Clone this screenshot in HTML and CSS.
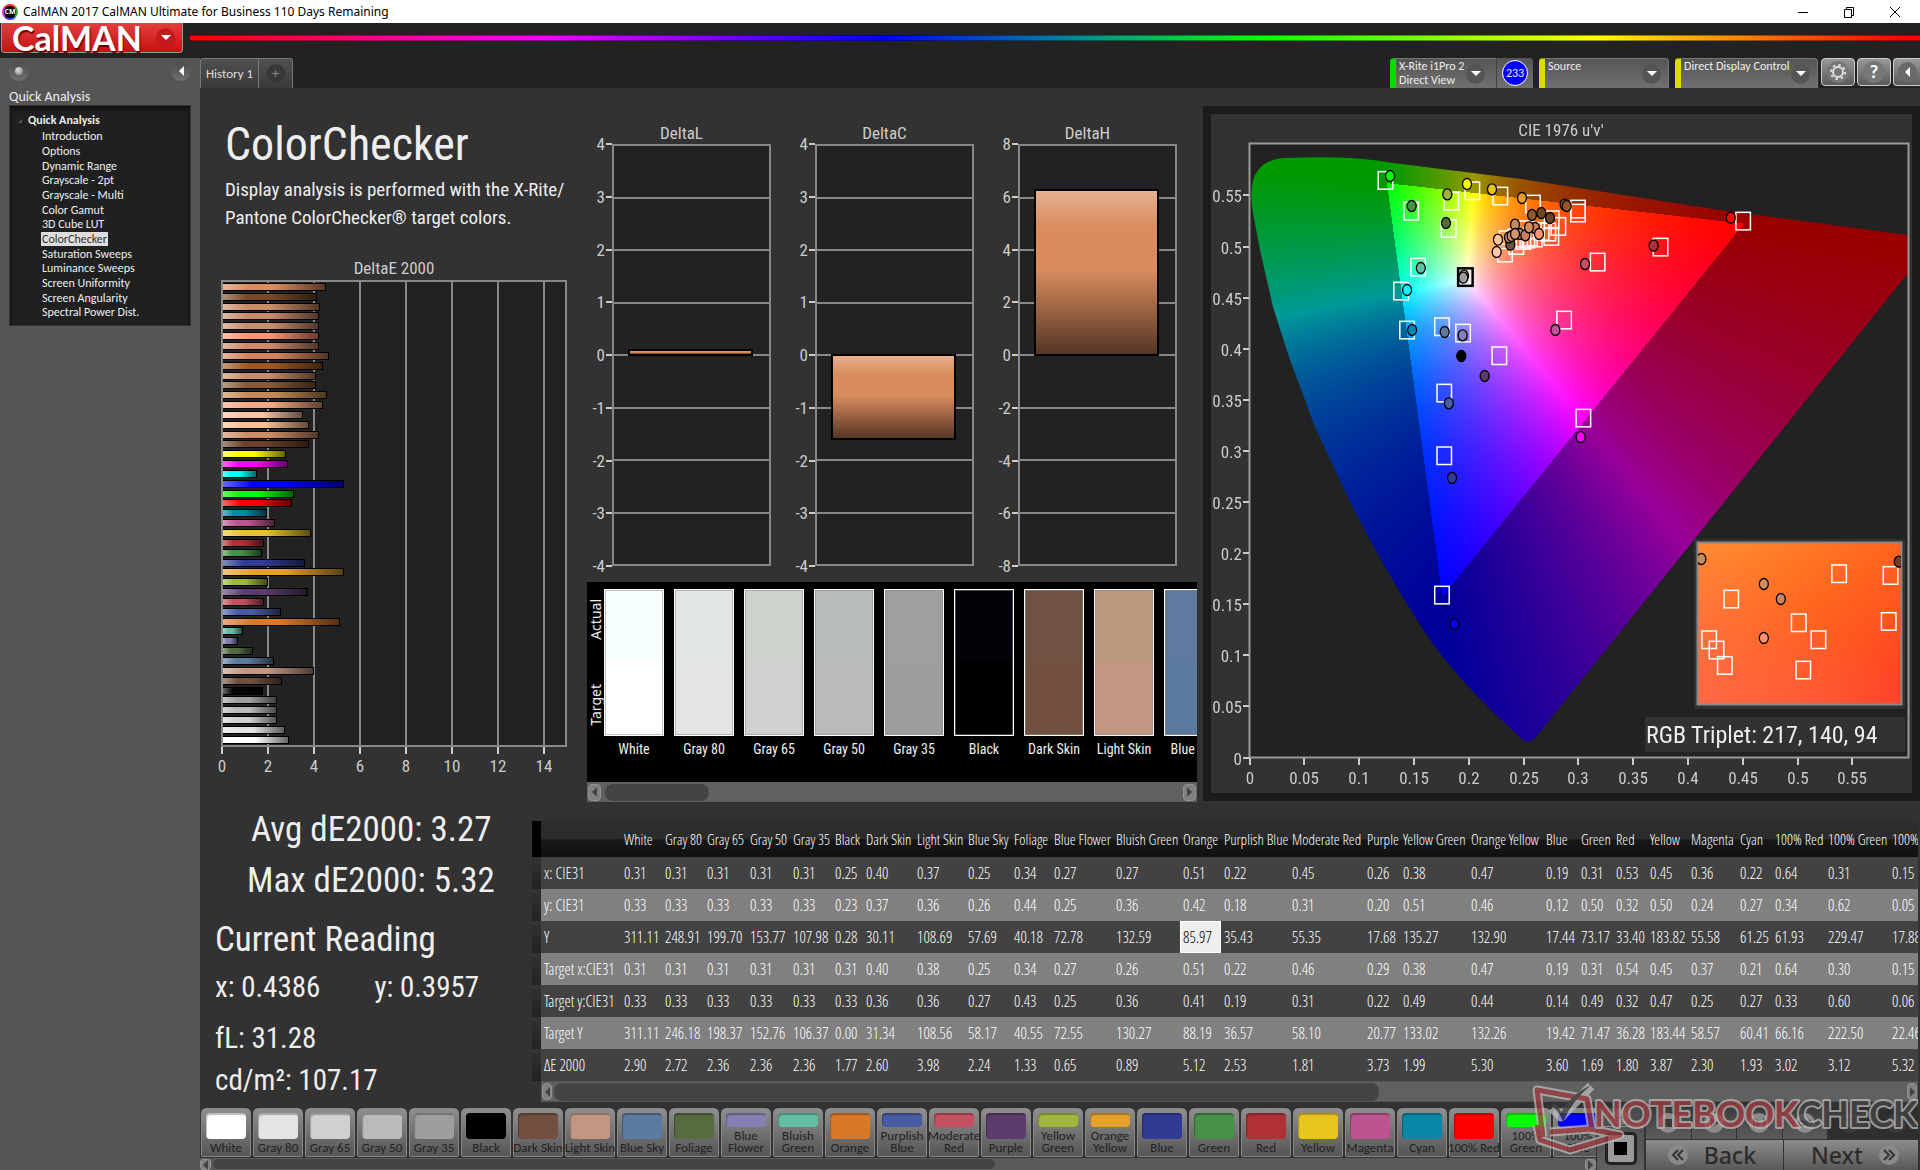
FILE: index.html
```html
<!DOCTYPE html>
<html lang="en">
<head>
<meta charset="utf-8">
<title>CalMAN 2017</title>
<link rel="stylesheet" href="styles.css">
</head>
<body>
<header class="titlebar">
  <span class="app-icon">CM</span>
  <span class="app-title">CalMAN 2017 CalMAN Ultimate for Business 110 Days Remaining</span>
  <span class="window-buttons">
    <button aria-label="Minimize"><svg width="12" height="12"><path d="M1 6.5h10"/></svg></button>
    <button aria-label="Restore"><svg width="12" height="12"><path d="M1.5 3.5h7v8h-7zM3.500 3.500v-2h7v8h-2"/></svg></button>
    <button aria-label="Close"><svg width="12" height="12"><path d="M1 1l10 10M11 1L1 11"/></svg></button>
  </span>
</header>
<div class="brandbar">
  <button class="brand"><span>CalMAN</span><i class="drop red"></i></button>
  <div class="rainbow"></div>
</div>
<div class="shell">
  <aside class="sidebar">
    <div class="side-tools"><button class="orb" aria-label="Pin"></button><button class="collapse" aria-label="Collapse"></button></div>
    <h2>Quick Analysis</h2>
    <nav class="tree">
      <strong>Quick Analysis</strong>
      <a href="#">Introduction</a><a href="#">Options</a><a href="#">Dynamic Range</a><a href="#">Grayscale - 2pt</a><a href="#">Grayscale - Multi</a><a href="#">Color Gamut</a><a href="#">3D Cube LUT</a><a href="#" class="current">ColorChecker</a><a href="#">Saturation Sweeps</a><a href="#">Luminance Sweeps</a><a href="#">Screen Uniformity</a><a href="#">Screen Angularity</a><a href="#">Spectral Power Dist.</a>
    </nav>
  </aside>
  <div class="main">
    <div class="tabs">
      <button class="tab">History 1</button><button class="tab add" aria-label="Add history"><span>+</span></button>
      <div class="devices">
        <button class="device meter"><span>X-Rite i1Pro 2<br>Direct View</span><i class="drop"></i></button><span class="count"><b>233</b></span>
        <button class="device source"><span>Source</span><i class="drop"></i></button>
        <button class="device display"><span>Direct Display Control</span><i class="drop"></i></button>
        <button class="tool" aria-label="Settings"><svg width="24" height="24" viewBox="-12 -12 24 24"><circle r="11" fill="#777"/><g stroke="#ddd" fill="none"><circle r="5" stroke-width="2"/><circle r="7" stroke-width="2" stroke-dasharray="2.500 3"/></g></svg></button>
        <button class="tool" aria-label="Help"><b>?</b></button>
        <button class="tool last" aria-label="Collapse"><i class="left-arrow"></i></button>
      </div>
    </div>
    <main class="content">
      <div class="upper">
        <section class="intro">
          <h1>ColorChecker</h1>
          <p>Display analysis is performed with the X-Rite/<br>Pantone ColorChecker® target colors.</p>
          <figure class="delta-e">
            <figcaption>DeltaE 2000</figcaption>
            <div class="plot" id="bars"></div>
            <div class="x-axis"><span>0</span><span>2</span><span>4</span><span>6</span><span>8</span><span>10</span><span>12</span><span>14</span></div>
          </figure>
        </section>
        <section class="middle">
          <div class="deltas" id="deltas"></div>
          <div class="compare">
            <div class="sides"><span>Actual</span><span>Target</span></div>
            <div class="pairs" id="pairs"></div>
          </div>
          <div class="scroll s1"><i class="left-arrow"></i><span class="thumb"></span><i class="right-arrow"></i></div>
        </section>
        <section class="cie">
          <canvas id="gamut" width="701" height="679"></canvas>
          <svg id="cie" viewBox="1211 114 701 679"></svg>
        </section>
      </div>
      <div class="lower">
        <section class="readings">
          <p class="big avg">Avg dE2000: 3.27</p>
          <p class="big max">Max dE2000: 5.32</p>
          <p class="big current-title">Current Reading</p>
          <p class="row"><span>x: 0.4386</span><span>y: 0.3957</span></p>
          <p class="fl">fL: 31.28</p>
          <p class="cd">cd/m²: 107.17</p>
        </section>
        <section class="data">
          <div class="data-clip"><table id="table"></table></div>
          <div class="scroll s2"><i class="left-arrow"></i><span class="thumb"></span><i class="right-arrow"></i></div>
        </section>
      </div>
    </main>
    <footer class="bottom">
      <div class="patches">
        <div class="patch-row" id="patches"></div>
        <div class="scroll s3"><i class="left-arrow"></i><span class="thumb"></span><i class="right-arrow"></i></div>
      </div>
      <div class="stop"><button class="up" aria-label="Expand"><svg width="20" height="18"><circle cx="10" cy="9" r="8" fill="#707070"/><path d="M6 11l4-5 4 5z" fill="#444"/></svg></button><button class="stop-button" aria-label="Stop"><i></i></button></div>
      <div class="transport">
        <div class="controls">
          <button aria-label="Stop reading"><svg viewBox="-12 -12 24 24"><circle r="10"/><path d="M-4-4h8v8h-8z"/></svg></button>
          <button aria-label="Play"><svg viewBox="-12 -12 24 24"><circle r="10"/><path d="M-3-5l8 5-8 5z"/></svg></button>
          <button aria-label="Read series"><svg viewBox="-12 -12 24 24"><circle r="10"/><path d="M-6-5h2v10h-2zM4-5h2v10h-2zM-3-4l6 4-6 4z"/></svg></button>
          <button aria-label="Continuous"><svg viewBox="-12 -12 24 24"><circle r="10"/><path class="line" d="M0 0c-2-3-6-3-6 0s4 3 6 0 6-3 6 0-4 3-6 0z"/></svg></button>
          <button class="off" aria-label="Refresh" disabled><svg viewBox="-12 -12 24 24"><circle r="10"/><path class="line" d="M5-2a5 5 0 1 0 0 5"/></svg></button>
          <button class="off" aria-label="More" disabled><svg viewBox="-12 -12 24 24"><circle r="10"/></svg></button>
        </div>
        <div class="steps">
          <button><svg viewBox="-12 -12 24 24"><circle r="10"/><path class="line" d="M0-5l-5 5 5 5M5-5l-5 5 5 5"/></svg><span>Back</span></button>
          <button><span>Next</span><svg viewBox="-12 -12 24 24"><circle r="10"/><path class="line" d="M0-5l5 5-5 5M-5-5l5 5-5 5"/></svg></button>
        </div>
      </div>
      <svg class="watermark" width="390" height="78" viewBox="1528 1082 390 78">
        <g fill="none" stroke-linejoin="round">
          <g stroke="#bbb" stroke-width="9"><path d="M1592 1130L1587 1099 1537 1090 1543 1137"/><path d="M1550 1132L1590 1129 1620 1135 1570 1150 1540 1140 1537 1125"/><path d="M1552 1108l9 9 30-31"/></g>
          <g stroke="#a23c40" stroke-width="5"><path d="M1592 1130L1587 1099 1537 1090 1543 1137"/><path d="M1550 1132L1590 1129 1620 1135 1570 1150 1540 1140 1537 1125"/></g>
        </g>
        <path d="M1550 1105q8-2 11 7 10-18 30-27-20 17-28 37-4-12-13-17z" fill="#444"/>
        <text x="1594" y="1127"><tspan class="red-part">NOTEBOOK</tspan><tspan class="grey-part">CHECK</tspan></text>
      </svg>
    </footer>
  </div>
</div>
<script src="script.js"></script>
</body>
</html>
```
FILE: styles.css
```css
* { box-sizing: border-box; }
body { margin: 0; min-height: 100vh; display: flex; flex-direction: column; background: #222; color: #eee; font-family: Carlito, Calibri, Lato, sans-serif; font-size: 12px; }
h1, h2, p, figure { margin: 0; font-weight: 400; }
button { font: inherit; color: inherit; border: 0; padding: 0; margin: 0; background: none; }
a { color: inherit; text-decoration: none; }
i { display: block; flex: none; }

.titlebar { height: 23px; background: #fff; color: #000; display: flex; align-items: center; gap: 5px; padding-left: 2px; font-family: "Noto Sans", "Open Sans", sans-serif; }
.app-icon { width: 16px; height: 16px; border-radius: 50%; border: 2px solid; border-color: #e33 #3a3 #33e #c3c; background: #000; color: #fff; font-size: 7px; font-weight: 700; line-height: 12px; text-align: center; }
.window-buttons { margin-left: auto; display: flex; gap: 34px; padding-right: 19px; }
.window-buttons svg { display: block; fill: none; stroke: #000; }

.brandbar { height: 35px; display: flex; align-items: flex-start; padding-left: 1px; gap: 7px; }
.brand { width: 182px; height: 30px; display: flex; align-items: center; justify-content: space-between; padding: 0 7px 0 10px; background: linear-gradient(#e04040, #c81010); border: 1px solid #999; border-top: 0; border-radius: 0 0 4px 4px; font-family: Lato, sans-serif; font-size: 34px; font-weight: 700; color: #fff; line-height: 30px; text-shadow: 1px 2px 1px #600; }
.rainbow { flex: 1; height: 6px; margin-top: 12px; border-top: 1px solid #0006; border-bottom: 1px solid #0006; background: linear-gradient(90deg, #f00, #f0f 20%, #00f 40%, #00a080 53%, #0f0 62%, #ff0 81%, #f00 99%); }
.drop { width: 19px; height: 20px; border-radius: 50%; background: #555; display: grid; place-items: center; }
.drop.red { background: #c41a1a; }
.drop::after { content: ""; border: 5px solid transparent; border-top: 5px solid #fff; border-bottom: 0; }

.shell { flex: 1; display: flex; }
.sidebar { width: 200px; background: #555; padding: 3px 9px; }
.side-tools { display: flex; justify-content: space-between; height: 28px; }
.side-tools button { width: 20px; height: 20px; border-radius: 50%; background: linear-gradient(#4a4a4a, #707070); display: grid; place-items: center; }
.orb::after { content: ""; width: 8px; height: 8px; border-radius: 50%; background: radial-gradient(circle at 35% 35%, #ddd, #777); }
.collapse::after, .left-arrow::after { content: ""; border: 5px solid transparent; border-right-color: #fff; border-left: 0; }
.right-arrow::after { content: ""; border: 5px solid transparent; border-left-color: #444; border-right: 0; }
.sidebar h2 { font-size: 14px; line-height: 16px; }
.tree { background: #202020; border: 1px solid #333; box-shadow: inset 0 3px 5px #111; height: 221px; padding: 6px 0 0 31px; display: flex; flex-direction: column; align-items: flex-start; }
.tree strong { line-height: 17px; margin-left: -13px; position: relative; }
.tree strong::before { content: ""; position: absolute; left: -10px; top: 7px; border-left: 4px solid transparent; border-bottom: 4px solid #555; }
.tree a { line-height: 14px; height: 14px; padding: 0 1px; margin-bottom: 1px; }
.tree a:nth-of-type(3n) { margin-bottom: 0; }
.tree .current { background: #ddd; color: #333; }

.main { flex: 1; min-width: 0; display: flex; flex-direction: column; }
.tabs { height: 30px; display: flex; }
.tab { width: 59px; border: 1px solid #777; border-bottom: 0; background: linear-gradient(#505050, #3a3a3a); border-radius: 3px 0 0 0; font-size: 13px; color: #ddd; }
.tab.add { width: 34px; border-left: 0; border-radius: 0 3px 0 0; display: grid; place-items: center; color: #888; font-size: 15px; }
.add span { width: 18px; height: 19px; border-radius: 50%; background: #383838; line-height: 19px; }
.devices { margin-left: auto; display: flex; }
.device { display: flex; align-items: center; justify-content: space-between; height: 30px; padding: 0 7px 0 3px; background: linear-gradient(#555, #707070); border: 1px solid #777; border-bottom: 0; border-radius: 4px 4px 0 0; border-left: 6px solid #dd0; text-align: left; line-height: 14px; }
.device > span { align-self: flex-start; white-space: nowrap; }
.meter { width: 107px; border-left-color: #0d0; padding-right: 11px; border-right: 1px solid #444; border-radius: 4px 0 0 0; }
.count { width: 36px; height: 30px; background: linear-gradient(#555, #707070); border-radius: 0 4px 0 0; margin-right: 6px; display: grid; place-items: center; }
.count b { width: 26px; height: 26px; border: 1px solid #fff; border-radius: 50%; background: #00f; line-height: 24px; text-align: center; font-weight: 400; }
.source { width: 130px; margin-right: 6px; }
.display { width: 143px; margin-right: 3px; }
.tool { width: 34px; height: 28px; border: 1px solid #ccc; border-radius: 4px; background: linear-gradient(#999, #5a5a5a); margin-right: 2px; display: grid; place-items: center; }
.tool b { width: 22px; height: 22px; border-radius: 50%; background: #777; font-size: 19px; line-height: 22px; color: #fff; }
.tool.last { width: 27px; margin: 0; border-right: 0; border-radius: 4px 0 0 4px; }
.tool .left-arrow { width: 19px; height: 20px; border-radius: 50%; background: #6a6a6a; display: grid; place-items: center; }

.content { flex: 1; background: #323232; font-family: "Roboto Condensed", "Open Sans Condensed", Roboto, sans-serif; }
.upper { display: flex; height: 714px; }
.intro { width: 380px; padding: 27px 0 0 25px; }
.intro h1 { font-size: 46px; line-height: 58px; }
.intro p { font-size: 19px; line-height: 28px; margin-top: 3px; white-space: nowrap; }
.delta-e { margin: 26px 0 0 -4px; width: 346px; }
figcaption { text-align: center; font-size: 17px; line-height: 20px; color: #ccc; }
.plot { position: relative; background: #222; border: 2px solid #888; }
.delta-e .plot { margin-top: 2px; height: 467px; display: flex; flex-direction: column; background: repeating-linear-gradient(90deg, #222 0 44px, #888 44px 46px); }
.slot { flex: 1; display: flex; align-items: center; }
.bar { height: 8px; border: 1px solid #000; border-left: 0; }
.x-axis { display: flex; margin-left: -22px; color: #ccc; font-size: 17px; line-height: 20px; width: 370px; }
.x-axis span { width: 46px; flex: none; text-align: center; }
.x-axis span::before { content: ""; display: block; width: 2px; height: 7px; margin: 0 auto 2px; background: #ccc; }

.middle { width: 618px; padding-top: 35px; }
.deltas { display: flex; }
.delta { width: 203px; }
.delta-body { display: flex; margin-top: 1px; padding-right: 12px; }
.y-axis { width: 32px; margin: -10px 0; display: flex; flex-direction: column; justify-content: space-between; color: #ccc; font-size: 17px; line-height: 20px; }
.y-axis span { display: flex; justify-content: flex-end; align-items: center; gap: 1px; }
.y-axis span::after { content: ""; width: 6px; height: 2px; background: #ccc; }
.delta .plot { flex: 1; height: 422px; display: flex; flex-direction: column; }
.line { flex: 1; border-bottom: 2px solid #888; }
.line:nth-child(8) { border: 0; }
.block { position: absolute; left: 9%; width: 81%; border: 2px solid #000; background: linear-gradient(#e6b090, #d98c5e 22%, #d98c5e 48%, #553625); }
.compare { margin: 16px 0 0 7px; height: 200px; width: 610px; background: #000; display: flex; overflow: hidden; padding-top: 7px; }
.sides { width: 17px; flex: none; height: 147px; display: flex; flex-direction: column; justify-content: space-between; padding: 10px 0; align-items: center; font-family: "Noto Sans", sans-serif; font-size: 14px; }
.sides span { writing-mode: vertical-rl; transform: rotate(180deg); line-height: 17px; }
.pairs { display: flex; gap: 10px; }
.pair { width: 60px; flex: none; text-align: center; font-size: 14px; white-space: nowrap; line-height: 26px; }
.pair div { height: 147px; border: 1px solid #fff; outline: 1px solid #8888; outline-offset: -2px; }
.scroll { background: #606060; display: flex; align-items: center; }
.scroll .right-arrow { margin-left: auto; }
.scroll i { width: 13px; height: 17px; background: #808080; border-radius: 4px; border: 1px solid #929292; display: grid; place-items: center; }
.scroll .left-arrow::after { border-right-color: #444; }
.thumb { background: #444; border-radius: 8px; height: 17px; }
.s1 { margin-left: 7px; width: 610px; height: 20px; padding: 0 1px; }
.s1 .thumb { width: 104px; margin-left: 4px; }

.cie { flex: 1; margin: 18px 0 0 5px; border: 8px solid #1b1b1b; display: grid; align-self: flex-start; }
.cie canvas, .cie svg { grid-area: 1 / 1; width: 100%; display: block; }
.cie text { fill: #ccc; font-size: 17px; }
.cie .triplet { fill: #eee; font-size: 24px; }

.lower { display: flex; height: 306px; }
.readings { width: 332px; flex: none; padding-left: 15px; font-size: 29px; white-space: nowrap; }
.readings p { line-height: 40px; }
.readings .big { font-size: 35px; }
.readings .avg { margin: 8px 0 0 36px; }
.readings .max { margin: 11px 0 0 32px; }
.readings .current-title { margin-top: 19px; }
.readings .row { display: flex; gap: 54px; margin-top: 7px; }
.readings .fl { margin-top: 11px; }
.readings .cd { margin-top: 2px; }
.data { flex: 1; min-width: 0; padding: 19px 2px 0 0; }
.data-clip { overflow: hidden; }
table { border-collapse: collapse; table-layout: fixed; width: 100%; color: #fff; font-family: "Open Sans Condensed Light", "Open Sans Condensed", "Roboto Condensed", sans-serif; font-size: 16px; }
th, td { padding: 0 0 0 3px; text-align: left; font-weight: 400; white-space: nowrap; height: 32px; line-height: 30px; }
thead th { height: 36px; font-size: 15px; background: linear-gradient(#2c2c2c 50%, #181818 52%, #101010); }
thead th:first-child { background: #000; }
tbody tr { background: #424242; }
tbody tr:nth-child(even) { background: #808080; }
tbody td.edge { background: linear-gradient(#333, #222); }
td.selected { background: #eee; color: #000; box-shadow: inset 0 0 0 1px #fff; }
.s2 { margin-left: 9px; height: 21px; border: 1px solid #555; }
.s2 i { width: 10px; }
.s2 .thumb { margin-left: 2px; width: 60%; height: 18px; }

.bottom { position: relative; height: 62px; display: flex; background: #323232; }
.patches { flex: 1; min-width: 0; overflow: hidden; }
.patch-row { display: flex; gap: 2px; padding-left: 1px; height: 49px; }
.patch { width: 50px; height: 49px; flex: none; border: 1px solid #888; border-radius: 5px 5px 2px 2px; background: linear-gradient(#8f8f8f, #555); color: #222; display: flex; flex-direction: column; align-items: center; padding-top: 4px; font-size: 13px; line-height: 12px; white-space: nowrap; }
.patch i { width: 40px; flex: 1; border-radius: 4px; box-shadow: inset 1px 2px 1px #0004; margin-bottom: 3px; }
.patch span { padding-bottom: 2px; }
.s3 { height: 12px; margin-top: 1px; background: #5a5a5a; }
.s3 i { width: 11px; height: 11px; border-radius: 3px; }
.s3 .thumb { height: 10px; width: 56%; margin-left: 2px; }
.stop { width: 49px; border-right: 2px solid #333; background: linear-gradient(#4a4a4a, #606060); display: flex; flex-direction: column; align-items: center; gap: 5px; margin-left: 1px; }
.up { width: 100%; height: 19px; border-bottom: 1px solid #888; display: grid; place-items: center; }
.stop-button { width: 32px; height: 33px; border: 3px solid #222; border-radius: 5px; background: #999; display: grid; place-items: center; }
.stop-button i { width: 13px; height: 13px; background: #000; }
.transport { width: 274px; padding-right: 2px; display: flex; flex-direction: column; gap: 1px; }
.controls, .steps { flex: 1; display: flex; gap: 1px; }
.controls button { flex: 1; background: linear-gradient(#3c3c3c, #5c5c5c); display: grid; place-items: center; }
.controls .off { background: #2e2e2e; }
.controls .off circle { fill: #3a3a3a; }
.controls .off path { stroke: #222; }
.transport svg { width: 24px; height: 24px; }
.transport circle { fill: #8a8a8a; }
.transport path { fill: #3a3a3a; }
.transport path.line { fill: none; stroke: #333; stroke-width: 2; }
.steps button { flex: 1; background: linear-gradient(#8c8c8c, #585858); display: flex; align-items: center; justify-content: space-between; padding: 0 27px 0 20px; color: #2c2c2c; font-family: "Noto Sans", "Open Sans", sans-serif; font-size: 23px; font-weight: 500; line-height: 28px; }
.steps button:last-child { padding: 0 17px 0 27px; }
.watermark { position: absolute; right: 2px; bottom: 10px; pointer-events: none; opacity: .75; }
.watermark text { font-family: Lato, sans-serif; font-size: 36px; font-weight: 700; paint-order: stroke; stroke: #bbb; stroke-width: 4px; stroke-linejoin: round; }
.red-part { fill: #a83c42; }
.grey-part { fill: #444; }
```
FILE: script.js
```js
const el = (tag, cls, html) => { const e = document.createElement(tag); if (cls) e.className = cls; if (html !== undefined) e.innerHTML = html; return e; };

// DeltaE 2000 bars, top to bottom
const bars = [
  [4.53,'#d98c5e'],[4.14,'#7a4a26'],[4.27,'#c98c68'],[4.23,'#c98a6c'],[4.23,'#c98e6e'],[4.23,'#ff9470'],[4.23,'#d08868'],[4.66,'#d4835c'],[4.4,'#a0561f'],[4.1,'#c98c6c'],[4.1,'#8a5a34'],[4.58,'#c48a56'],[4.4,'#f4a680'],[3.53,'#f8c4a6'],[3.79,'#fcc090'],[4.23,'#cc8c66'],[3.75,'#6c4028'],[2.76,'#ffff00'],[2.84,'#ff00ff'],[1.49,'#00ffff'],[5.32,'#0000ff'],[3.12,'#00ff00'],[3.02,'#ff0000'],[1.93,'#0888a6'],[2.3,'#bc5490'],[3.87,'#e8c41e'],[1.8,'#b03038'],[1.69,'#469048'],[3.6,'#303c94'],[5.3,'#e6a02c'],[1.99,'#9eb83e'],[3.73,'#5c3c6c'],[1.81,'#c45060'],[2.53,'#485ca4'],[5.12,'#d87828'],[0.89,'#62bda6'],[0.65,'#8580b2'],[1.33,'#566b40'],[2.24,'#5c7aa0'],[3.98,'#c29682'],[2.6,'#725040'],[1.77,'#060606'],[2.36,'#a0a0a0'],[2.36,'#bababa'],[2.36,'#d0d0d0'],[2.72,'#e4e4e4'],[2.9,'#ffffff']];
const barBox = document.getElementById('bars');
for (const [v, c] of bars) {
  const slot = el('div', 'slot'), b = el('div', 'bar');
  b.style.width = v / 15 * 100 + '%';
  b.style.background = `linear-gradient(90deg,#fff6,#fff0 25%,#0000 50%,#0009),${c}`;
  slot.append(b); barBox.append(slot);
}

// DeltaL / DeltaC / DeltaH panels
for (const [name, max, v] of [['DeltaL', 4, .1], ['DeltaC', 4, -1.62], ['DeltaH', 8, 6.3]]) {
  const f = el('figure', 'delta', `<figcaption>${name}</figcaption>`);
  const body = el('div', 'delta-body'), axis = el('div', 'y-axis'), plot = el('div', 'plot');
  for (let i = 4; i >= -4; i--) axis.append(el('span', '', i * max / 4));
  for (let i = 0; i < 8; i++) plot.append(el('div', 'line'));
  const b = el('div', 'block');
  b.style.top = 49.7 - Math.max(v, 0) / max * 50 + '%';
  b.style.height = Math.abs(v) / max * 50 + .5 + '%';
  plot.append(b); body.append(axis, plot); f.append(body);
  document.getElementById('deltas').append(f);
}

// measured over target colour
for (const [n, a, t] of [['White','#f8ffff','#fff'],['Gray 80','#e2e6e5','#e4e4e4'],['Gray 65','#cfd3ce','#d0d0d0'],['Gray 50','#b7bbba','#bababa'],['Gray 35','#9da09e','#9e9e9e'],['Black','#020208','#000'],['Dark Skin','#6f5241','#725040'],['Light Skin','#bb997e','#c29682'],['Blue Sky','#60799f','#5c7aa0']]) {
  const p = el('div', 'pair'), s = el('div');
  s.style.background = `linear-gradient(${a} 50%,${t} 50%)`;
  p.append(s, n); document.getElementById('pairs').append(p);
}

// data table
const names = ['White','Gray 80','Gray 65','Gray 50','Gray 35','Black','Dark Skin','Light Skin','Blue Sky','Foliage','Blue Flower','Bluish Green','Orange','Purplish Blue','Moderate Red','Purple','Yellow Green','Orange Yellow','Blue','Green','Red','Yellow','Magenta','Cyan','100% Red','100% Green','100% Blue'];
const rows = {
  'x: CIE31': '0.31 0.31 0.31 0.31 0.31 0.25 0.40 0.37 0.25 0.34 0.27 0.27 0.51 0.22 0.45 0.26 0.38 0.47 0.19 0.31 0.53 0.45 0.36 0.22 0.64 0.31 0.15',
  'y: CIE31': '0.33 0.33 0.33 0.33 0.33 0.23 0.37 0.36 0.26 0.44 0.25 0.36 0.42 0.18 0.31 0.20 0.51 0.46 0.12 0.50 0.32 0.50 0.24 0.27 0.34 0.62 0.05',
  'Y': '311.11 248.91 199.70 153.77 107.98 0.28 30.11 108.69 57.69 40.18 72.78 132.59 85.97 35.43 55.35 17.68 135.27 132.90 17.44 73.17 33.40 183.82 55.58 61.25 61.93 229.47 17.88',
  'Target x:CIE31': '0.31 0.31 0.31 0.31 0.31 0.31 0.40 0.38 0.25 0.34 0.27 0.26 0.51 0.22 0.46 0.29 0.38 0.47 0.19 0.31 0.54 0.45 0.37 0.21 0.64 0.30 0.15',
  'Target y:CIE31': '0.33 0.33 0.33 0.33 0.33 0.33 0.36 0.36 0.27 0.43 0.25 0.36 0.41 0.19 0.31 0.22 0.49 0.44 0.14 0.49 0.32 0.47 0.25 0.27 0.33 0.60 0.06',
  'Target Y': '311.11 246.18 198.37 152.76 106.37 0.00 31.34 108.56 58.17 40.55 72.55 130.27 88.19 36.57 58.10 20.77 133.02 132.26 19.42 71.47 36.28 183.44 58.57 60.41 66.16 222.50 22.46',
  'ΔE 2000': '2.90 2.72 2.36 2.36 2.36 1.77 2.60 3.98 2.24 1.33 0.65 0.89 5.12 2.53 1.81 3.73 1.99 5.30 3.60 1.69 1.80 3.87 2.30 1.93 3.02 3.12 5.32' };
const widths = [9,80,41,42,43,43,42,31,51,51,46,40,62,67,41,68,75,36,68,75,35,35,34,41,49,35,53,64];
document.getElementById('table').innerHTML =
  '<colgroup>' + widths.map(w => `<col style="width:${w}px">`).join('') + '<col></colgroup>' +
  '<thead><tr><th></th><th></th>' + names.map(n => `<th scope="col">${n}</th>`).join('') + '</tr></thead><tbody>' +
  Object.entries(rows).map(([k, v]) => `<tr><td class="edge"></td><th scope="row">${k}</th>` + v.split(' ').map((x, i) => `<td${k === 'Y' && i === 12 ? ' class="selected"' : ''}>${x}</td>`).join('') + '</tr>').join('') + '</tbody>';

// patch buttons
const colours = ['#fff','#e4e4e4','#d0d0d0','#bababa','#9e9e9e','#000','#725040','#c29682','#5c7aa0','#566b40','#8580b2','#62bda6','#d87828','#485ca4','#c45060','#5c3c6c','#9eb83e','#e6a02c','#303c94','#469048','#b03038','#e8c41e','#bc5490','#0888a6','#f00','#0f0','#00f'];
const twoLine = [10, 11, 13, 14, 16, 17, 25, 26];
names.forEach((n, i) => {
  const b = el('button', 'patch'), s = el('i');
  s.style.background = colours[i];
  b.append(s, el('span', '', twoLine.includes(i) ? n.replace(' ', '<br>') : n));
  document.getElementById('patches').append(b);
});

// CIE 1976 diagram: origin at (1249.5, 757.5), 1096 px per u', 1022 px per v'
const locus = new Path2D('M1287 158Q1310 157 1338 157.500Q1365 158 1393 163L1521 179L1719 210L1908 235V273L1535 738Q1529 744 1523 740L1494 713Q1455 675 1430 640Q1397 590 1370 540L1349 500L1315 427L1289 357L1273 307L1260 250L1253 213Q1249 188 1255 175Q1264 158 1287 158Z');
const cv = document.getElementById('gamut'), ctx = cv.getContext('2d'), img = ctx.createImageData(701, 679);
for (let py = 0; py < 679; py++) for (let px = 0; px < 701; px++) {
  const u = (px + 1211 - 1249.5) / 1096, v = (757.5 - py - 114) / 1022;
  if (v <= 0) continue;
  const X = 9 * u / (4 * v), Z = (12 - 3 * u - 20 * v) / (4 * v);
  let c = [3.2406 * X - 1.5372 - .4986 * Z, -.9689 * X + 1.8758 + .0415 * Z, .0557 * X - .204 + 1.057 * Z];
  const m = Math.max(...c), k = Math.min(...c) < 0 ? 153 : 255, o = (py * 701 + px) * 4;
  c.forEach((q, j) => img.data[o + j] = Math.max(0, q) / m * k);
  img.data[o + 3] = 255;
}
ctx.putImageData(img, 0, 0);
ctx.translate(-1211, -114);
ctx.globalCompositeOperation = 'destination-in'; ctx.fill(locus);
ctx.globalCompositeOperation = 'destination-over';
ctx.fillStyle = '#222'; ctx.fillRect(1249, 143, 660, 615);
ctx.fillStyle = '#323232'; ctx.fillRect(1211, 114, 701, 679);

let s = '<defs><linearGradient id="g" x2="1" y2="1"><stop stop-color="#ff9030"/><stop offset=".5" stop-color="#ff641e"/><stop offset="1" stop-color="#ff3c24"/></linearGradient><linearGradient id="h" x1="0" y1="1" x2=".6" y2=".4"><stop stop-color="#ff6a50" stop-opacity=".8"/><stop offset="1" stop-color="#ff6a50" stop-opacity="0"/></linearGradient><clipPath id="c"><path d="M1698 543h203v161h-203z"/></clipPath></defs>';
s += '<text x="1561" y="136" text-anchor="middle">CIE 1976 u\'v\'</text><path d="M1249.500 143.500h659v614h-659z" fill="none" stroke="#999" stroke-width="2"/>';
for (let i = 0; i < 12; i++) {
  const n = +(i * .05).toFixed(2), x = Math.round(1249.5 + i * 54.8), y = Math.round(757.5 - i * 51.1);
  s += `<path d="M${x} 758v7M1249 ${y}h-6" stroke="#ccc" stroke-width="2"/><text x="${x}" y="784" text-anchor="middle">${n}</text><text x="1242" y="${y + 7}" text-anchor="end">${n}</text>`;
}
const sq = (x, y, c = '#fff', w = 1.5) => `<rect x="${x - 7.25}" y="${y - 9}" width="14.500" height="17.500" fill="none" stroke="${c}" stroke-width="${w}"/>`;
const dot = (x, y, f) => `<ellipse cx="${x}" cy="${y}" rx="4.500" ry="5.500" fill="${f}" stroke="#000" stroke-width="1.300"/>`;
const A = (x, y) => [1200 + x / 2.178, 100 + y / 3], C = (x, y) => [1200 + x / 2.178, 480 + y / 3], B = (x, y) => [1440 + x / 3, 150 + y / 3];
[[404,242],[460,334],[475,502],[438,574],[451,691],[527,681],[573,700],[652,768],[532,880],[835,955],[793,661],[866,487],[1003,442],[1183,364],[532,1068]].forEach(p => s += sq(...A(...p)));
s += sq(...C(527, 346));
[[34,154],[97,123],[181,139],[279,163],[414,178],[414,190],[335,210],[355,230],[334,260],[325,247],[26,236],[195,310],[229,287],[250,272],[262,268],[270,262],[284,265],[260,240],[200,270],[305,245],[225,265]].forEach(p => s += sq(...B(...p)));
s += sq(...A(578, 532), '#000', 2.5);
[[414,228,'#0f0'],[461,318,'#46924a'],[481,504,'#62bda6'],[451,570,'#0ff'],[462,690,'#08a'],[533,696,'#5c7ba0'],[572,706,'#8580b4'],[569,768,'#000'],[620,828,'#5c3c6c'],[542,910,'#485ca8'],[774,690,'#bc5298'],[829,1011,'#f0f'],[988,437,'#b03038'],[1156,353,'#f00'],[549,1134,'#303c96']].forEach(([x, y, f]) => s += dot(...A(x, y), f));
s += dot(...C(554, 432), '#00f');
[[22,133,'#9db53c'],[81,102,'#ff0'],[156,118,'#e8c41e'],[246,144,'#e6a028'],[374,164,'#a5622a'],[380,168,'#9a561f'],[18,219,'#566b3c'],[276,195,'#8a5a30'],[304,189,'#744722'],[330,204,'#6e4028'],[174,269,'#ffc896'],[170,306,'#ffc8aa'],[225,224,'#c88c5a'],[211,284,'#6e5040'],[207,262,'#c99070'],[240,252,'#c98c68'],[215,258,'#c98c68'],[256,256,'#c87f60'],[225,252,'#d09470'],[285,234,'#d08060'],[267,232,'#d98c5e'],[297,252,'#ff9470'],[435,342,'#bf5064'],[72,377,'#bbb'],[70,383,'#9c9c9c']].forEach(([x, y, f]) => s += dot(...B(x, y), f));
s += '<path d="M1694 539h211v170h-211z" fill="#323232"/><path d="M1697.500 542.500h204v162h-204z" fill="url(#g)"/><path d="M1697.500 542.500h204v162h-204z" fill="url(#h)" stroke="#888" stroke-width="2"/><g clip-path="url(#c)">';
[[1392,282],[1504,287],[1157,358],[1304,429],[1500,425],[1109,480],[1125,511],[1347,480],[1143,557],[1314,571]].forEach(p => s += sq(...C(...p)));
[[1092,237,'#c88c5a'],[1522,245,'#6e4028'],[1228,312,'#d08e60'],[1265,357,'#c98560'],[1228,474,'#ff9470']].forEach(([x, y, f]) => s += dot(...C(x, y), f));
s += '</g><path d="M1645 717h260v35h-260z" fill="#323232"/><text class="triplet" x="1646" y="743">RGB Triplet: 217, 140, 94</text>';
document.getElementById('cie').innerHTML = s;
```
